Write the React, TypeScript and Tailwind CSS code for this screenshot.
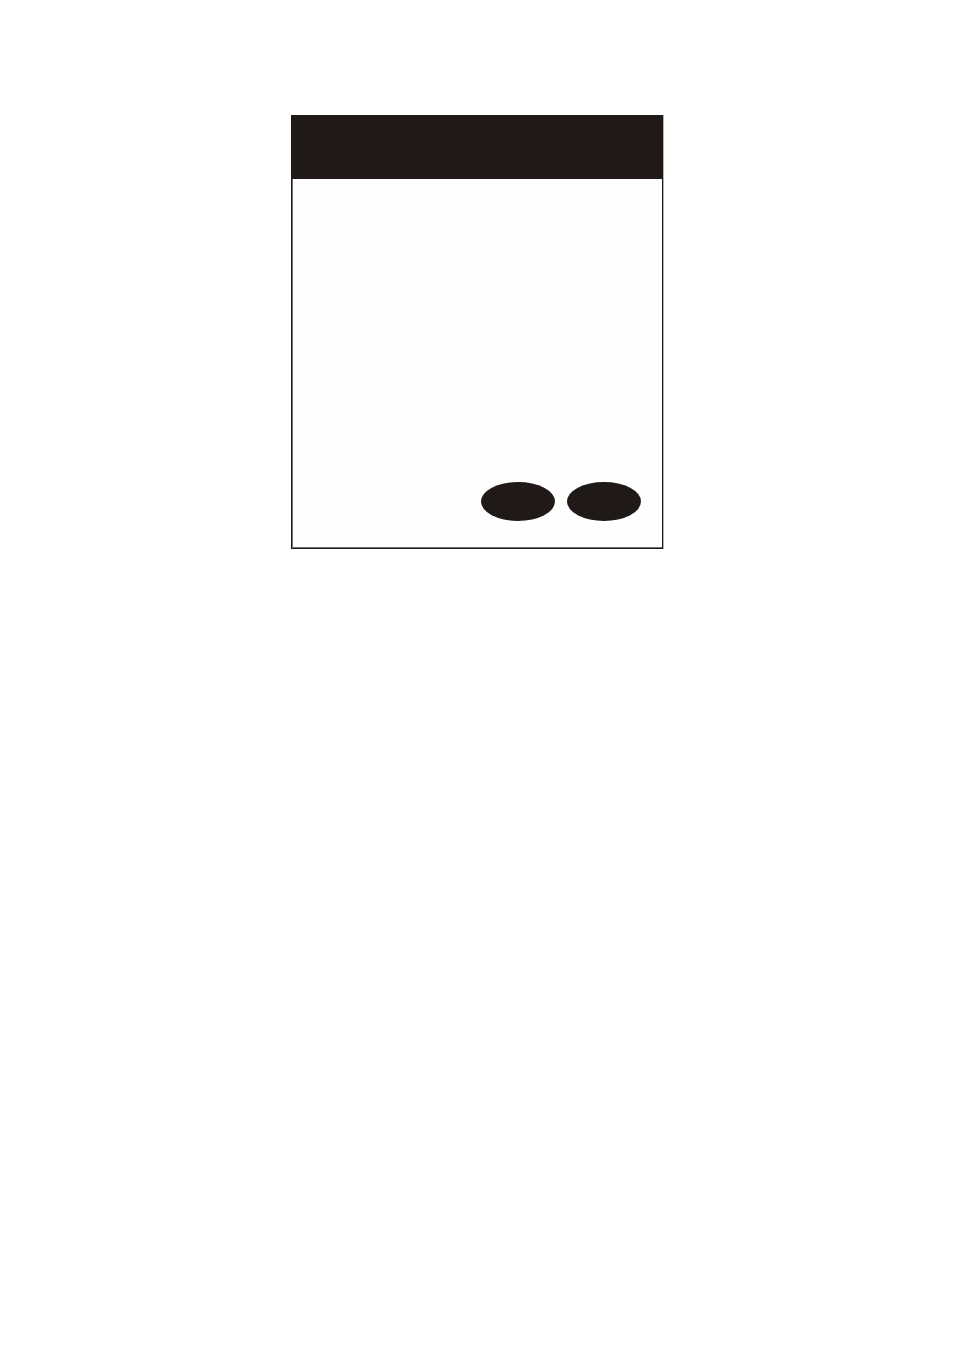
const actions = [
  { id: "previous", label: "Previous" },
  { id: "next", label: "Next" },
];

function OvalButton({ label }: { label: string }) {
  return (
    <button
      type="button"
      aria-label={label}
      className="h-[39px] w-[74px] rounded-[50%] bg-[#1f1a17]"
    />
  );
}

export default function App() {
  return (
    <main className="flex min-h-screen items-start justify-center bg-white px-4 pt-[115px] pb-16">
      <section className="flex min-h-[434px] w-full max-w-[372px] flex-col border border-[#1f1a17] bg-[#fefefe] shadow-[1px_0_0_#b4b1af]">
        {/* Header */}
        <header className="h-[63px] bg-[#1f1a17]" />

        {/* Body */}
        <div className="flex flex-1 flex-col justify-end border-b border-l border-[#73706e] pr-[21px] pb-[26px]">
          <div className="flex justify-end gap-3">
            {actions.map((action) => (
              <OvalButton key={action.id} label={action.label} />
            ))}
          </div>
        </div>
      </section>
    </main>
  );
}
